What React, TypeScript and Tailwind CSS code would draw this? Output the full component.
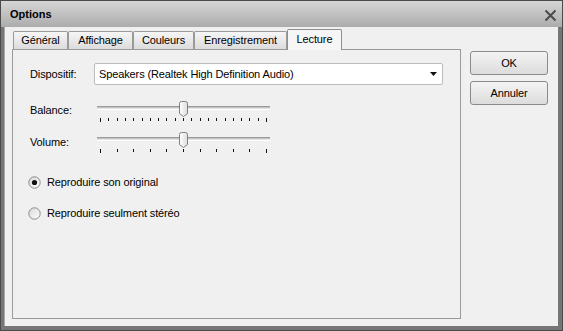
import React from "react";

const font = "font-['Tahoma','Liberation_Sans',sans-serif] text-[11px] tracking-[-0.12px] text-black";

function Slider({ ticks }: { ticks: number }) {
  const xs = Array.from({ length: ticks }, (_, i) => 4 + (166 * i) / (ticks - 1));
  return (
    <svg width="176" height="24" viewBox="0 0 176 24">
      <rect x="1" y="7" width="173" height="1" fill="#9a9a9a" />
      <rect x="1" y="8" width="173" height="1" fill="#c4c4c4" />
      <rect x="1" y="9" width="173" height="1" fill="#e2e2e2" />
      <rect x="1" y="10" width="173" height="1" fill="#ffffff" />
      {xs.map((x, i) => {
        const end = i === 0 || i === xs.length - 1;
        return <rect key={i} x={Math.round(x)} y={19} width="1" height={end ? 4 : 3} fill="#111" />;
      })}
      <defs>
        <linearGradient id="thumb" x1="0" x2="1" y1="0" y2="0">
          <stop offset="0" stopColor="#ffffff" />
          <stop offset="1" stopColor="#dedede" />
        </linearGradient>
      </defs>
      <path d="M83.5 4.5 Q83.5 2.5 85.5 2.5 L89.5 2.5 Q91.5 2.5 91.5 4.5 L91.5 14.5 L87.5 17.5 L83.5 14.5 Z" fill="url(#thumb)" stroke="#808080" strokeWidth="1" />
    </svg>
  );
}

function Radio({ checked, label }: { checked?: boolean; label: string }) {
  return (
    <div className="flex items-center h-[16px]">
      <svg width="13" height="13" viewBox="0 0 13 13">
        <defs>
          <linearGradient id={checked ? "r1" : "r2"} x1="0" y1="0" x2="1" y2="1">
            <stop offset="0" stopColor="#d8d8d8" />
            <stop offset="1" stopColor="#ffffff" />
          </linearGradient>
        </defs>
        <circle cx="6.5" cy="6.5" r="5.7" fill={`url(#${checked ? "r1" : "r2"})`} stroke="#8a8a8a" strokeWidth="1" />
        {checked && <circle cx="6.5" cy="6.5" r="2.6" fill="#111" />}
      </svg>
      <span className="ml-[6px]">{label}</span>
    </div>
  );
}

function Tab({ label, w, active }: { label: string; w: string; active?: boolean }) {
  if (active) {
    return (
      <div className={`${w} h-[21px] -mb-px z-10 border border-b-0 border-[#8e8e8e] bg-[#f6f6f6] rounded-t-[2px] flex items-center justify-center pb-[2px]`}>
        {label}
      </div>
    );
  }
  return (
    <div className={`${w} h-[18px] border border-b-0 border-[#9a9a9a] bg-gradient-to-b from-[#f6f6f6] to-[#dcdcdc] rounded-t-[2px] flex items-center justify-center`}>
      {label}
    </div>
  );
}

function Button({ label }: { label: string }) {
  return (
    <div className="w-[78px] h-[24px] border border-[#8a8a8a] rounded-[3px] bg-gradient-to-b from-[#f4f4f4] to-[#dcdcdc] flex items-center justify-center">
      {label}
    </div>
  );
}

export default function App() {
  return (
    <div className={`w-[563px] h-[331px] bg-[#767676] border border-[#4a4a4a] flex flex-col ${font}`}>
      <div className="h-[26px] bg-gradient-to-b from-[#d6d6d6] to-[#acacac] flex items-center justify-between pl-[9px] pr-[5px] pt-[1px]">
        <span className="font-bold text-[11px] tracking-normal">Options</span>
        <svg width="13" height="13" viewBox="0 0 13 13" className="mt-[1px]">
          <path d="M1.5 1.5 L11.5 11.5 M11.5 1.5 L1.5 11.5" stroke="#4a4a4a" strokeWidth="2" />
        </svg>
      </div>
      <div className="flex-1 ml-[3px] mr-[4px] mb-[4px] bg-[#f0f0f0] border-l border-[#a8a8a8] flex pl-[7px] pt-[2px]">
        <div className="flex flex-col">
          <div className="flex items-end h-[20px] pl-[1px]">
            <Tab label="Général" w="w-[55px]" />
            <Tab label="Affichage" w="w-[65px]" />
            <Tab label="Couleurs" w="w-[61px]" />
            <Tab label="Enregistrement" w="w-[93px]" />
            <Tab label="Lecture" w="w-[55px]" active />
          </div>
          <div className="w-[449px] h-[270px] border border-[#9a9a9a] bg-[#f0f0f0] flex flex-col pl-[17px] pt-[13px]">
            <div className="flex items-center h-[22px]">
              <span className="w-[64px]">Dispositif:</span>
              <div className="w-[349px] h-[22px] bg-white border border-[#bcbcbc] rounded-[2px] flex items-center justify-between pl-[4px] pr-[5px]">
                <span>Speakers (Realtek High Definition Audio)</span>
                <svg width="7" height="4" viewBox="0 0 7 4">
                  <path d="M0 0 L7 0 L3.5 4 Z" fill="#111" />
                </svg>
              </div>
            </div>
            <div className="flex items-start h-[24px] mt-[14px]">
              <span className="w-[66px] mt-[3px]">Balance:</span>
              <Slider ticks={21} />
            </div>
            <div className="flex items-start h-[24px] mt-[7px]">
              <span className="w-[66px] mt-[4px]">Volume:</span>
              <Slider ticks={11} />
            </div>
            <div className="mt-[20px] -ml-[2px]">
              <Radio checked label="Reproduire son original" />
            </div>
            <div className="mt-[15px] -ml-[2px]">
              <Radio label="Reproduire seulment stéréo" />
            </div>
          </div>
        </div>
        <div className="flex flex-col ml-[9px] pt-[22px] gap-[6px]">
          <Button label="OK" />
          <Button label="Annuler" />
        </div>
      </div>
    </div>
  );
}
